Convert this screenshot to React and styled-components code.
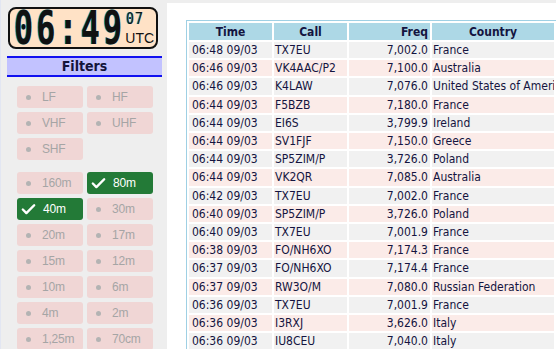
import styled, { createGlobalStyle } from "styled-components";
import { Check } from "lucide-react";

const GlobalStyle = createGlobalStyle`
  html, body {
    margin: 0;
    padding: 0;
    background: #eeeeee;
    overflow: hidden;
  }
  body {
    font-family: "DejaVu Sans Condensed", "DejaVu Sans", sans-serif;
  }
`;

const bandGroups = [
  [
    { label: "LF" },
    { label: "HF" },
    { label: "VHF" },
    { label: "UHF" },
    { label: "SHF" },
  ],
  [
    { label: "160m" },
    { label: "80m", on: true },
    { label: "40m", on: true },
    { label: "30m" },
    { label: "20m" },
    { label: "17m" },
    { label: "15m" },
    { label: "12m" },
    { label: "10m" },
    { label: "6m" },
    { label: "4m" },
    { label: "2m" },
    { label: "1,25m" },
    { label: "70cm" },
  ],
];

const spots = [
  ["06:48 09/03", "TX7EU", "7,002.0", "France"],
  ["06:46 09/03", "VK4AAC/P2", "7,100.0", "Australia"],
  ["06:46 09/03", "K4LAW", "7,076.0", "United States of America"],
  ["06:44 09/03", "F5BZB", "7,180.0", "France"],
  ["06:44 09/03", "EI6S", "3,799.9", "Ireland"],
  ["06:44 09/03", "SV1FJF", "7,150.0", "Greece"],
  ["06:44 09/03", "SP5ZIM/P", "3,726.0", "Poland"],
  ["06:44 09/03", "VK2QR", "7,085.0", "Australia"],
  ["06:42 09/03", "TX7EU", "7,002.0", "France"],
  ["06:40 09/03", "SP5ZIM/P", "3,726.0", "Poland"],
  ["06:40 09/03", "TX7EU", "7,001.9", "France"],
  ["06:38 09/03", "FO/NH6XO", "7,174.3", "France"],
  ["06:37 09/03", "FO/NH6XO", "7,174.4", "France"],
  ["06:37 09/03", "RW3O/M", "7,080.0", "Russian Federation"],
  ["06:36 09/03", "TX7EU", "7,001.9", "France"],
  ["06:36 09/03", "I3RXJ", "3,626.0", "Italy"],
  ["06:36 09/03", "IU8CEU", "7,040.0", "Italy"],
  ["06:35 09/03", "EA8DO", "7,010.0", "Canary Islands"],
  ["06:34 09/03", "TX7EU", "7,002.0", "France"],
];

export default function App() {
  return (
    <>
      <GlobalStyle />
      <Page>
        <Sidebar>
          <Clock>
            <Digits>06:49</Digits>
            <ClockSide>
              <Seconds>07</Seconds>
              <Utc>UTC</Utc>
            </ClockSide>
          </Clock>
          <FiltersTitle>Filters</FiltersTitle>
          {bandGroups.map((group, gi) => (
            <BandGrid key={gi}>
              {group.map((band) => (
                <BandButton key={band.label} $on={band.on}>
                  {band.on ? (
                    <Check size={17} strokeWidth={3.4} color="#fff" />
                  ) : (
                    <Dot />
                  )}
                  <BandLabel $on={band.on}>{band.label}</BandLabel>
                </BandButton>
              ))}
            </BandGrid>
          ))}
        </Sidebar>
        <Main>
          <SpotTable>
            <colgroup>
              <col style={{ width: 83 }} />
              <col style={{ width: 73 }} />
              <col style={{ width: 81 }} />
              <col style={{ width: 122 }} />
              <col style={{ width: 90 }} />
            </colgroup>
            <thead>
              <tr>
                <Th>Time</Th>
                <Th>Call</Th>
                <Th $right>Freq</Th>
                <Th>Country</Th>
                <Th>Spotter</Th>
              </tr>
            </thead>
            <tbody>
              {spots.map((s, i) => (
                <Row key={i} $odd={i % 2 === 1}>
                  <Td $pad={3}>{s[0]}</Td>
                  <Td>{s[1]}</Td>
                  <Td $right>{s[2]}</Td>
                  <Td>{s[3]}</Td>
                  <Td />
                </Row>
              ))}
            </tbody>
          </SpotTable>
        </Main>
      </Page>
    </>
  );
}

const Page = styled.div`
  display: flex;
  height: 349px;
  width: 556px;
  overflow: hidden;
`;

const Sidebar = styled.aside`
  width: 155px;
  flex: none;
  padding: 7px 5px 0 6px;
  background: #eeeeee;
  border-left: 1px solid #e2e6f2;
  box-sizing: content-box;
`;

const Clock = styled.div`
  display: flex;
  align-items: center;
  margin-left: 1px;
  width: 146px;
  height: 38px;
  border: 2px solid #111;
  border-radius: 8px;
  background: #ffe2c6;
`;

const Digits = styled.div`
  font-family: "DejaVu Sans Mono", monospace;
  font-weight: bold;
  font-size: 32px;
  line-height: 26px;
  letter-spacing: 3px;
  margin-left: 4px;
  color: #111;
  transform: scaleY(1.42);
  transform-origin: center;
  text-shadow: -1px 0 #1aa6c8;
`;

const ClockSide = styled.div`
  display: flex;
  flex-direction: column;
  align-self: flex-start;
  margin-left: 0;
`;

const Seconds = styled.div`
  font-family: "DejaVu Sans Mono", monospace;
  font-size: 13px;
  line-height: 12px;
  margin-top: 4px;
  margin-left: 1px;
  letter-spacing: 1px;
  color: #111;
  transform: scaleY(1.15);
  text-shadow: -1px 0 #1aa6c8;
`;

const Utc = styled.div`
  font-family: "Liberation Sans", Arial, sans-serif;
  font-size: 14px;
  line-height: 14px;
  margin-top: 6px;
  color: #111;
`;

const FiltersTitle = styled.div`
  margin-top: 7px;
  height: 17px;
  border-top: 2px solid #1010f0;
  border-bottom: 2px solid #1010f0;
  background: #c2c2ff;
  text-align: center;
  font-family: "DejaVu Sans Condensed", "DejaVu Sans", sans-serif;
  font-weight: bold;
  font-size: 14px;
  line-height: 17px;
  color: #14143a;
`;

const BandGrid = styled.div`
  display: grid;
  grid-template-columns: 66px 66px;
  gap: 4px;
  padding: 9px 0 2px 10px;
  & + & {
    padding-top: 10px;
  }
`;

const BandButton = styled.div`
  display: flex;
  align-items: center;
  height: 22px;
  padding-left: ${({ $on }) => ($on ? "3px" : "9px")};
  border-radius: 3px;
  background: ${({ $on }) => ($on ? "#237a37" : "#f0d6d5")};
  color: ${({ $on }) => ($on ? "#ffffff" : "#a5a5a5")};
`;

const Dot = styled.span`
  width: 5px;
  height: 5px;
  border-radius: 50%;
  background: #b3b3b3;
`;

const BandLabel = styled.span`
  font-family: "Liberation Sans", Arial, sans-serif;
  font-size: 12px;
  margin-left: ${({ $on }) => ($on ? "6px" : "11px")};
  letter-spacing: -0.2px;
`;

const Main = styled.main`
  flex: 1;
  margin-top: 3px;
  padding: 17px 0 0 19px;
  background: #ffffff;
  overflow: hidden;
`;

const SpotTable = styled.table`
  table-layout: fixed;
  border-collapse: separate;
  border-spacing: 2px;
  border-top: 1px solid #9fd0e4;
  border-left: 1px solid #9fd0e4;
  font-size: 12px;
  color: #141440;
  width: 462px;
`;

const Th = styled.th`
  background: #add8e6;
  height: 17px;
  padding: 0 2px;
  font-weight: bold;
  text-align: ${({ $right }) => ($right ? "right" : "center")};
  white-space: nowrap;
  overflow: hidden;
`;

const Row = styled.tr`
  background: ${({ $odd }) => ($odd ? "#fbebe8" : "#f1f1f1")};
`;

const Td = styled.td`
  height: 16.2px;
  line-height: 16.2px;
  padding: 0 ${({ $right }) => ($right ? "2px" : "1px")} 0
    ${({ $pad }) => ($pad ? `${$pad}px` : "1px")};
  text-align: ${({ $right }) => ($right ? "right" : "left")};
  white-space: nowrap;
  overflow: hidden;
`;
